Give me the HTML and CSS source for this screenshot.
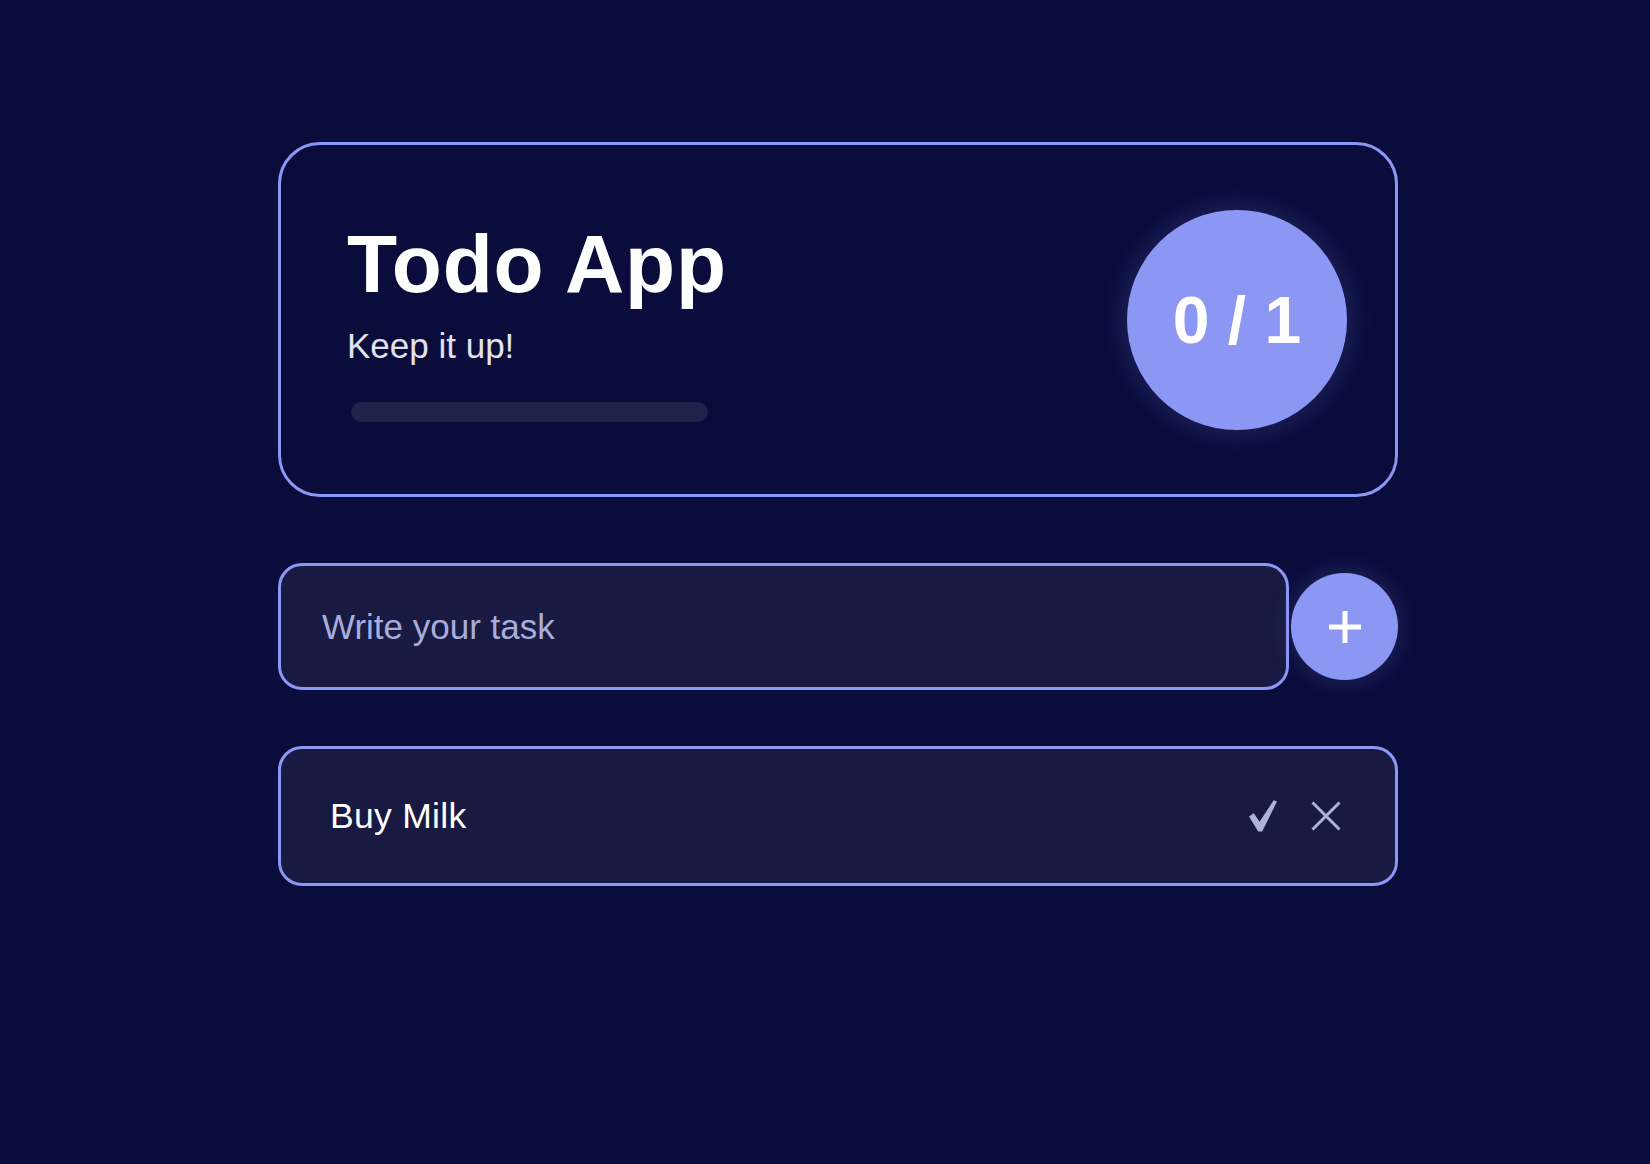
FILE: index.html
```html
<!DOCTYPE html>
<html lang="en">
<head>
<meta charset="utf-8">
<title>Todo App</title>
<link rel="stylesheet" href="styles.css">
</head>
<body>
<main class="app">
  <section class="hero">
    <div class="hero-text">
      <h1 class="title">Todo App</h1>
      <p class="subtitle">Keep it up!</p>
      <div class="progress"><div class="progress-fill" style="width:0%"></div></div>
    </div>
    <div class="counter">0 / 1</div>
  </section>

  <form class="add-row" onsubmit="return false">
    <input class="task-input" type="text" placeholder="Write your task">
    <button class="add-btn" type="button" aria-label="Add task">
      <svg width="32" height="32" viewBox="0 0 32 32"><rect x="0" y="13.5" width="32" height="5" fill="#fff"/><rect x="13.5" y="0" width="5" height="32" fill="#fff"/></svg>
    </button>
  </form>

  <ul class="list">
    <li class="item">
      <span class="item-text">Buy Milk</span>
      <span class="actions">
        <button class="icon-btn" type="button" aria-label="Complete">
          <svg width="28" height="32" viewBox="0 0 28 32"><path d="M0 16.5 L4.8 13.2 L10.6 21.8 L24.6 0.3 L28 1.6 L13.2 31.5 L9.2 31.5 Z" fill="#aeb2dd"/></svg>
        </button>
        <button class="icon-btn" type="button" aria-label="Delete">
          <svg width="30" height="30" viewBox="0 0 30 30"><path d="M1.5 1.5 L28.5 28.5 M28.5 1.5 L1.5 28.5" stroke="#aeb2dd" stroke-width="3" fill="none"/></svg>
        </button>
      </span>
    </li>
  </ul>
</main>
</body>
</html>
```

FILE: styles.css
```css
* { box-sizing: border-box; }

html, body {
  margin: 0;
  padding: 0;
  background: #0a0c3c;
  font-family: "Liberation Sans", Arial, Helvetica, sans-serif;
  color: #ffffff;
}

.app {
  width: 1120px;
  margin-left: 278px;
  padding-top: 142px;
}

.hero {
  height: 355px;
  border: 3px solid #8c96f3;
  border-radius: 42px;
  display: flex;
  align-items: center;
  justify-content: space-between;
  padding: 0 48px 0 66px;
}

.hero-text {
  display: flex;
  flex-direction: column;
}

.title {
  margin: 0;
  font-size: 82px;
  line-height: 92px;
  font-weight: 700;
  letter-spacing: 0.8px;
  color: #ffffff;
}

.subtitle {
  margin: 15px 0 0 0;
  font-size: 35px;
  line-height: 42px;
  color: #e2e2ea;
}

.progress {
  margin: 35px 0 0 4px;
  width: 357px;
  height: 20px;
  border-radius: 10px;
  background: #20224a;
  overflow: hidden;
}

.progress-fill {
  height: 100%;
  background: #8c96f3;
}

.counter {
  width: 220px;
  height: 220px;
  border-radius: 50%;
  background: #8c96f3;
  display: flex;
  align-items: center;
  justify-content: center;
  font-size: 66px;
  font-weight: 700;
  color: #ffffff;
  box-shadow: 0 0 30px rgba(140, 150, 243, 0.22);
}

.add-row {
  margin: 66px 0 0 0;
  display: flex;
  align-items: center;
  gap: 2px;
}

.task-input {
  flex: 1;
  height: 127px;
  border: 3px solid #8c96f3;
  border-radius: 24px;
  background: #181a42;
  padding: 0 0 0 41px;
  font-family: "Liberation Sans", Arial, Helvetica, sans-serif;
  font-size: 35px;
  color: #ffffff;
  outline: none;
}

.task-input::placeholder {
  color: #a9addb;
}

.add-btn {
  width: 107px;
  height: 107px;
  flex: 0 0 107px;
  border: none;
  border-radius: 50%;
  background: #8c96f3;
  display: flex;
  align-items: center;
  justify-content: center;
  padding: 0;
  cursor: pointer;
  box-shadow: 0 0 24px rgba(140, 150, 243, 0.22);
}

.list {
  list-style: none;
  margin: 56px 0 0 0;
  padding: 0;
}

.item {
  height: 140px;
  border: 3px solid #8c96f3;
  border-radius: 24px;
  background: #181a42;
  display: flex;
  align-items: center;
  justify-content: space-between;
  padding: 0 54px 0 49px;
}

.item-text {
  font-size: 35.5px;
  letter-spacing: 0.3px;
  color: #ffffff;
}

.actions {
  display: flex;
  align-items: center;
  gap: 34px;
}

.icon-btn {
  background: none;
  border: none;
  padding: 0;
  display: flex;
  cursor: pointer;
}
```
